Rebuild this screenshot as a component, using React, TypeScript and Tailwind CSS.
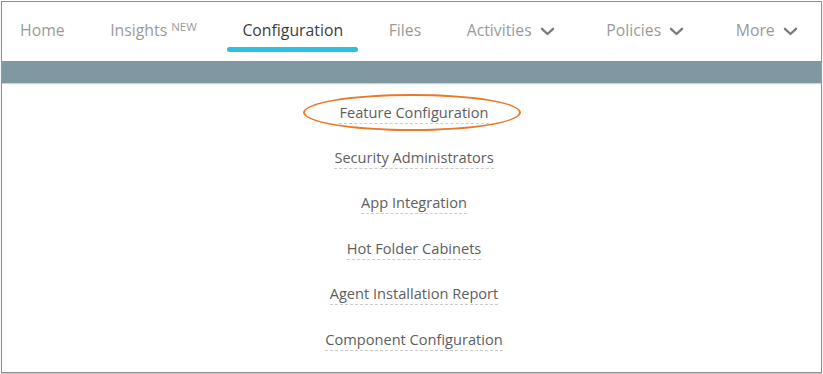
const NAV = [
  { label: "Home" },
  { label: "Insights", badge: "NEW" },
  { label: "Configuration", active: true },
  { label: "Files" },
  { label: "Activities", menu: true },
  { label: "Policies", menu: true },
  { label: "More", menu: true },
];

const LINKS = [
  "Feature Configuration",
  "Security Administrators",
  "App Integration",
  "Hot Folder Cabinets",
  "Agent Installation Report",
  "Component Configuration",
];

function Chevron() {
  return (
    <svg width="15" height="9" viewBox="0 0 15 9" className="ml-[8px] mr-[6px] mt-[1px]">
      <path d="M2 1.8 L7.5 7 L13 1.8" fill="none" stroke="#7c7c7c" strokeWidth="2.4" strokeLinecap="round" strokeLinejoin="round" />
    </svg>
  );
}

export default function App() {
  return (
    <div className="h-[374px] w-[823px] bg-white p-px font-['Open_Sans',sans-serif]">
      <div className="flex h-[372px] w-[821px] flex-col border border-[#8f8f8f] shadow-[0_1px_1px_#c8c8c8]">
        {/* Top nav */}
        <nav className="flex h-[59px] items-start gap-[45.5px] pl-[18px] pt-[17px] text-[15.8px]">
          {NAV.map((item) => (
            <div key={item.label} className="relative flex items-center">
              <span className={item.active ? "text-[#3d3d3d]" : "text-[#9a9a9a]"}>{item.label}</span>
              {item.badge && (
                <span className="ml-[4px] mt-[2px] self-start text-[11.5px] leading-[12px] text-[#9a9a9a]">{item.badge}</span>
              )}
              {item.menu && <Chevron />}
              {item.active && (
                <span className="absolute -left-[15px] -right-[15px] top-[28px] h-[5px] rounded-full bg-[#2bc0e4]" />
              )}
            </div>
          ))}
        </nav>

        <div className="h-[22px] bg-[#7f98a2] shadow-[0_1px_1px_#c9d2d6]" />

        {/* Configuration links */}
        <div className="flex flex-col items-center pl-[5px] pt-[7px]">
          {LINKS.map((label, i) => (
            <div key={label} className="relative flex h-[45.4px] items-center justify-center">
              <span className="border-b border-dashed border-[#cccccc] pb-[1px] text-[14.6px] leading-[20px] text-[#5e5e5e]">
                {label}
              </span>
              {i === 0 && (
                <span className="absolute -left-[36px] -right-[32px] top-[4px] h-[37px] rounded-[50%] border-[2.5px] border-[#e9782b]" />
              )}
            </div>
          ))}
        </div>
      </div>
    </div>
  );
}
